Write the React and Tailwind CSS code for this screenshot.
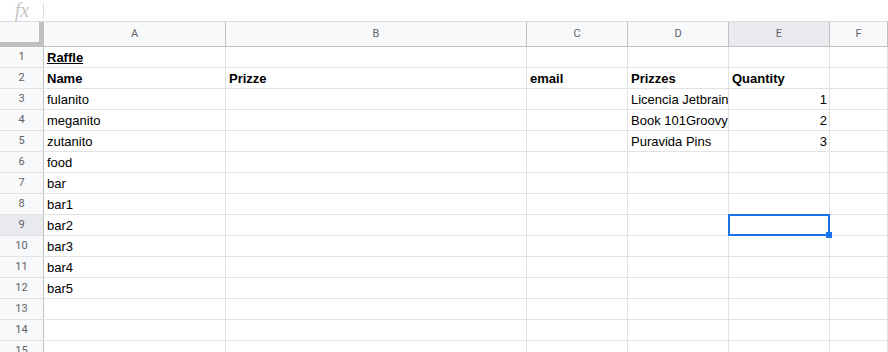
import React from "react";

const cols = [
  { key: "A", w: "w-[182px]" },
  { key: "B", w: "w-[301px]" },
  { key: "C", w: "w-[101px]" },
  { key: "D", w: "w-[101px]" },
  { key: "E", w: "w-[101px]" },
  { key: "F", w: "flex-1" },
];

const data = {
  1: { A: { t: "Raffle", b: true, u: true } },
  2: {
    A: { t: "Name", b: true },
    B: { t: "Prizze", b: true },
    C: { t: "email", b: true },
    D: { t: "Prizzes", b: true },
    E: { t: "Quantity", b: true },
  },
  3: { A: { t: "fulanito" }, D: { t: "Licencia Jetbrains" }, E: { t: "1", r: true } },
  4: { A: { t: "meganito" }, D: { t: "Book 101Groovy" }, E: { t: "2", r: true } },
  5: { A: { t: "zutanito" }, D: { t: "Puravida Pins" }, E: { t: "3", r: true } },
  6: { A: { t: "food" } },
  7: { A: { t: "bar" } },
  8: { A: { t: "bar1" } },
  9: { A: { t: "bar2" } },
  10: { A: { t: "bar3" } },
  11: { A: { t: "bar4" } },
  12: { A: { t: "bar5" } },
};

export default function App() {
  const rows = Array.from({ length: 15 }, (_, i) => i + 1);
  return (
    <div className="w-[888px] h-[352px] overflow-hidden bg-white font-['Liberation_Sans',Arial,sans-serif]">
      {/* formula bar */}
      <div className="h-[22px] flex items-center border-b border-[#dadce0]">
        <div className="w-[43px] flex justify-center items-center h-full">
          <span className="font-['Liberation_Serif',serif] italic text-[20px] leading-none text-[#c6c6c6] -mt-[2px] pl-[1px]">fx</span>
        </div>
        <div className="w-[1px] h-[16px] bg-[#dadce0]" />
      </div>
      {/* column headers */}
      <div className="flex h-[25px] bg-[#f8f9fa] border-b border-[#c0c0c0]">
        <div className="w-[44px] h-full relative border-r border-[#c0c0c0]">
          <div className="absolute right-0 top-0 bottom-0 w-[4px] bg-[#c0c0c0]" />
          <div className="absolute left-0 right-0 bottom-0 h-[4px] bg-[#c0c0c0]" />
        </div>
        {cols.map((c) => (
          <div
            key={c.key}
            className={`${c.w} shrink-0 h-full flex items-center justify-center border-r border-[#c0c0c0] font-['Roboto',sans-serif] text-[11px] text-[#5f6368] ${c.key === "E" ? "bg-[#e8eaed]" : ""}`}
          >
            {c.key}
          </div>
        ))}
      </div>
      {/* rows */}
      {rows.map((r) => (
        <div key={r} className="flex h-[21px] border-b border-[#e2e2e3]">
          <div
            className={`w-[44px] shrink-0 h-full flex items-center justify-center border-r border-[#c0c0c0] font-['Roboto',sans-serif] text-[11px] text-[#5f6368] ${r === 9 ? "bg-[#e8eaed]" : "bg-[#f8f9fa]"}`}
          >
            {r}
          </div>
          {cols.map((c) => {
            const cell = data[r] && data[r][c.key];
            const sel = r === 9 && c.key === "E";
            return (
              <div
                key={c.key}
                className={`${c.w} shrink-0 h-full relative border-r border-[#e2e2e3]`}
              >
                <div
                  className={`h-full overflow-hidden flex items-end pb-[1px] pl-[3px] pr-[2px] text-[13px] leading-[16px] text-black ${cell && cell.r ? "justify-end" : ""}`}
                >
                  {cell && (
                    <span className={`whitespace-nowrap ${cell.b ? "font-bold" : ""} ${cell.u ? "underline" : ""}`}>{cell.t}</span>
                  )}
                </div>
                {sel && (
                  <div className="absolute -top-[1px] -left-[1px] -right-[1px] -bottom-[1px] z-10 border-2 border-[#1a73e8]">
                    <div className="absolute -right-[4px] -bottom-[4px] w-[6px] h-[6px] bg-[#1a73e8]" />
                  </div>
                )}
              </div>
            );
          })}
        </div>
      ))}
    </div>
  );
}
